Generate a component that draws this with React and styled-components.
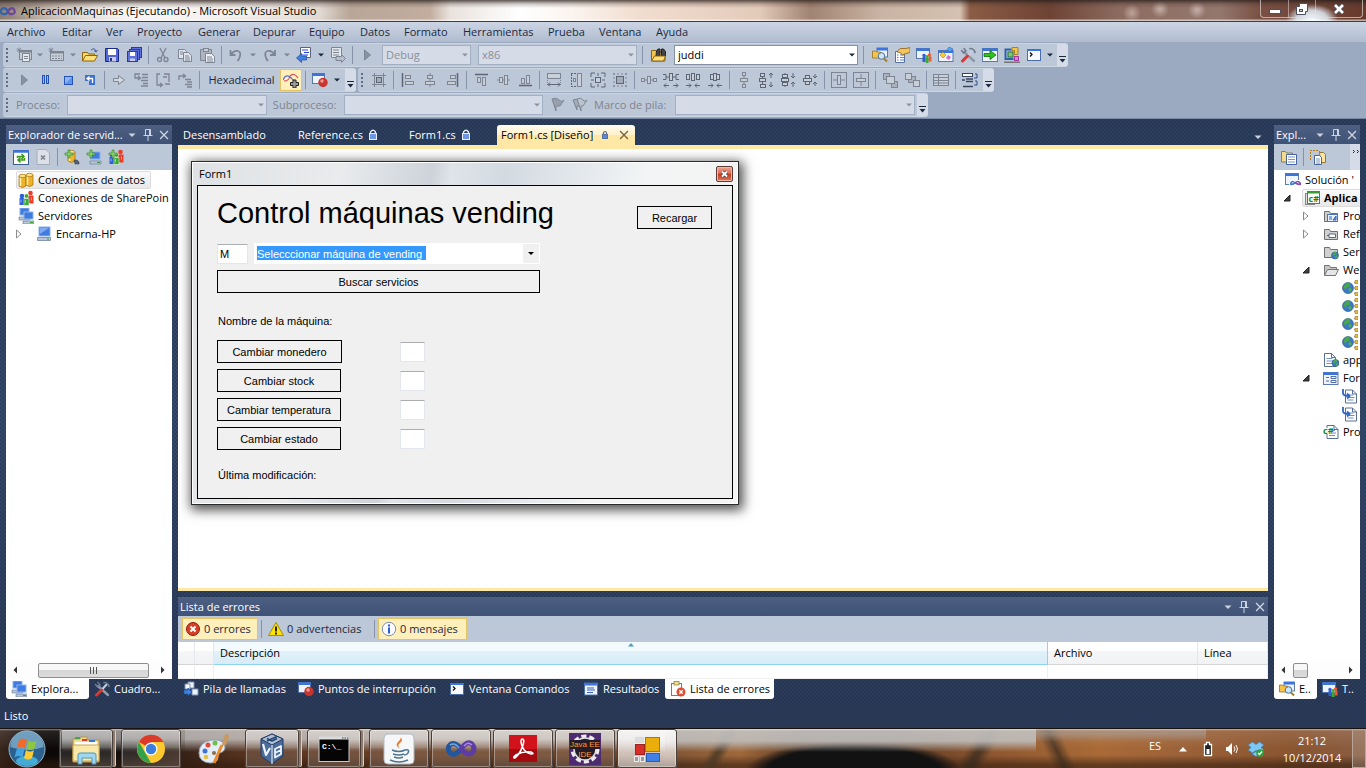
import React from "react";
import styled, { createGlobalStyle, css } from "styled-components";

const GlobalStyle = createGlobalStyle`
  * { box-sizing: border-box; }
  body {
    margin: 0;
    font-family: "Open Sans", "Noto Sans", sans-serif;
    font-size: 11px;
    line-height: 16px;
    color: #000;
  }
  button, input, select { font: inherit; color: inherit; }
`;

/* ---------- icon drawings ---------- */

const G = "#7d8593";
const L = "#c9cfd9";
const D = "#5d6675";

const server = (x, y) => (
  <g key={x}>
    <rect x={x} y={y} width="9" height="7" fill="#3f7be0" stroke="#8fb2ea" strokeWidth="1" />
    <path d={`M${x - 1} ${y + 9}h11v3h-11z`} fill="#b9c6d8" stroke="#5f7797" strokeWidth=".6" />
    <path d={`M${x + 6} ${y + 10.5}h3`} stroke="#32a13a" />
  </g>
);
const plus = <path d="M1 4h3V1h2v3h3v2H6v3H4V6H1z" fill="#8ad06c" stroke="#3e8a32" strokeWidth=".7" />;
const people = (
  <g strokeWidth=".5">
    <circle cx="4" cy="6" r="2.300" fill="#2d60d8" /><path d="M1.500 8h5v7h-5z" fill="#2d60d8" />
    <circle cx="12.500" cy="3" r="2.300" fill="#ef3a25" /><path d="M10 5.500h5.500v8H10z" fill="#ef3a25" />
    <circle cx="8.500" cy="6" r="2.200" fill="#3ea83a" stroke="#fff" /><path d="M6 8.500h5V15.500H6z" fill="#3ea83a" stroke="#fff" />
    <path d="M3 9.500v3M13.500 7.500v3M7.500 10v3" stroke="#fff" />
  </g>
);
const cyl = (x, y, h) => (
  <g>
    <path d={`M${x} ${y + 2}v${h}q3.500 3 7 0v-${h}z`} fill="#efb32b" stroke="#a26f0c" strokeWidth=".7" />
    <path d={`M${x + 1.5} ${y + 3}v${h - 1}`} stroke="#fff1b0" strokeWidth="1.500" />
    <ellipse cx={x + 3.5} cy={y + 2} rx="3.500" ry="1.700" fill="#ffe283" stroke="#a26f0c" strokeWidth=".7" />
  </g>
);
const globe = (cx, cy, r) => (
  <g>
    <circle cx={cx} cy={cy} r={r} fill="#3d79c4" stroke="#24518c" strokeWidth=".6" />
    <path d={`M${cx - r + 1} ${cy - 1}q${r / 2} -${r} ${r} -${r - 1}q${r / 2} ${r} -${r / 3} ${r - 1}q-1 ${r / 2} -${r / 2} ${r / 3}z`} fill="#48a74a" />
    <path d={`M${cx} ${cy + 1}l${r / 2} -1l1 ${r / 2}l-2 1z`} fill="#4fb04c" />
  </g>
);
const docShape = (x, y) => (
  <g>
    <path d={`M${x} ${y}h7l4 4v9h-11z`} fill="#fff" stroke="#48608a" strokeWidth=".9" />
    <path d={`M${x + 7} ${y}v4h4`} fill="none" stroke="#48608a" strokeWidth=".9" />
    <path d={`M${x + 2} ${y + 5}h6M${x + 2} ${y + 7.5}h7M${x + 2} ${y + 10}h6`} stroke="#6f8ecb" />
  </g>
);
const win = (x, y, w, h) => (
  <g>
    <rect x={x} y={y} width={w} height={h} fill="#eef3fc" stroke="#4c6da8" strokeWidth=".9" />
    <rect x={x} y={y} width={w} height="2.500" fill="#3b74dd" />
  </g>
);
const greyFolder = <path d="M1.500 3.500h5l1 2h7v8h-13z" fill="#d0d0d0" stroke="#707070" />;
const tools = (
  <g fill="none" strokeLinecap="round">
    <path d="M4 5L14 14" stroke="#8e99ab" strokeWidth="2.400" />
    <path d="M1.500 3.500l2 2.500 2.500-2-2-2.500" stroke="#6f7b8f" strokeWidth="1.500" />
    <path d="M13 3L8.500 8" stroke="#c7cfdb" strokeWidth="2" />
    <path d="M10 1.500q4 0 5 4" stroke="#6f7b8f" strokeWidth="1.700" />
    <path d="M7.500 9L2.500 14" stroke="#d63a32" strokeWidth="3" />
  </g>
);
const explorer = (
  <g>
    {win(5, 1, 10.500, 9)}
    <path d="M.5 4h3l1 1h4v6h-8z" fill="#f5c54b" stroke="#98701a" strokeWidth=".8" />
    <circle cx="9.500" cy="9" r="3.300" fill="#cde7fa" stroke="#4c7198" />
    <path d="M12 11.500l3 3" stroke="#a67d28" strokeWidth="2" />
  </g>
);
const breakpoint = (
  <g>
    {win(.5, 1.500, 12, 10)}
    <circle cx="11" cy="10.500" r="4.700" fill="#c8352e" /><circle cx="10" cy="9" r="1.700" fill="#eea092" />
  </g>
);
const teamIcon = (
  <g>
    {win(.5, 1.500, 13, 10)}
    <circle cx="8" cy="8.500" r="1.700" fill="#2d60d8" /><path d="M6.500 10h3v5h-3z" fill="#2d60d8" />
    <circle cx="13.500" cy="8" r="1.700" fill="#ef5a35" /><path d="M12.500 9.500h3v5h-3z" fill="#ef5a35" />
    <circle cx="11" cy="9.500" r="1.600" fill="#3ea83a" /><path d="M9.700 11h2.800v5H9.700z" fill="#3ea83a" />
  </g>
);
const redX = (
  <g><circle cx="8" cy="8" r="6.500" fill="#d93f24" stroke="#8f1d10" /><path d="M5.500 5.500l5 5M10.500 5.500l-5 5" stroke="#fff" strokeWidth="2" /></g>
);
const arrowsH = <path d="M1 13.500h5M4 11.500l2 2-2 2M15 13.500h-5M12 11.500l-2 2 2 2" stroke={D} fill="none" />;

const glyphs = {
  newProject: <g><rect x="3.500" y="3.500" width="12" height="9" fill={L} stroke={G} /><path d="M4 4.500h11" stroke={G} strokeWidth="2" /><rect x="6.500" y="6.500" width="7" height="8" fill="#e5e8ed" stroke={G} /><path d="M8 9.500h4M8 11.500h4" stroke={G} /><path d="M.5 3h5M3 .5v5M1 1l4 4M5 1L1 5" stroke={G} strokeWidth=".7" /></g>,
  addItem: <g><rect x="2.500" y="4.500" width="13" height="9" fill={L} stroke={G} /><path d="M3 5.500h12" stroke={G} strokeWidth="2" /><path d="M4 9h10M4 11.500h10" stroke={G} strokeDasharray="2 1" /><path d="M.5 3h5M3 .5v5M1 1l4 4M5 1L1 5" stroke={G} strokeWidth=".7" /></g>,
  open: <g><path d="M.5 13.500V5.500h5l1 1.500h6v3" fill="#f9d66e" stroke="#8b6510" /><path d="M.5 14l3-5.500h12l-3 5.500z" fill="#ffdf78" stroke="#8b6510" /><path d="M9 3q4-3 5 1.500M12 3.500l2 1.500 1.500-2" fill="none" stroke="#3a5aa0" /></g>,
  save: <g><path d="M1.500 1.500h12l1 1v12h-13z" fill="#5266d8" stroke="#1b2a86" /><rect x="4" y="2" width="8" height="6" fill="#fff" /><rect x="5" y="10" width="7" height="4.500" fill="#c8cdec" /><rect x="6" y="11" width="2" height="3" fill="#25338b" /></g>,
  saveAll: <g fill="#5d70dc" stroke="#2a3aa0"><rect x="5.500" y=".5" width="10" height="10" /><rect x="3.500" y="2.500" width="10" height="10" /><rect x="1.500" y="4.500" width="10" height="10" /><path d="M4 5h5v4H4z" fill="#fff" stroke="none" /><path d="M4 11.500h5V14H4z" fill="#c8cdec" stroke="none" /></g>,
  cut: <g fill="none" stroke={G} strokeWidth="1.300"><path d="M5 1l5 10M11 1L6 11" /><circle cx="4.500" cy="12.500" r="2" /><circle cx="11" cy="12.500" r="2" /></g>,
  copy: <g fill="#dfe3ea" stroke={G}><path d="M1.500 2.500h6l2 2v7h-8z" /><path d="M6.500 5.500h5l3 3v6h-8z" /><path d="M8 9h4M8 11h5M8 13h5M3 5h3M3 7h3" /></g>,
  paste: <g fill={L} stroke={G}><path d="M1.500 2.500h11v11h-11z" fill="#aeb5c0" /><rect x="4.500" y="1.500" width="5" height="3" /><path d="M6.500 6.500h6l3 3v6h-9z" fill="#eceff3" /><path d="M8 10h5M8 12h6M8 14h6" /></g>,
  undo: <path d="M2.500 3v5h5M3 7.500q3-4.500 7-3.500t1 8l-1.500 2" fill="none" stroke={G} strokeWidth="1.800" />,
  redo: <path d="M13 3v5H8M12.500 7.500q-3-4.500-7-3.500t-1 8l1.500 2" fill="none" stroke={G} strokeWidth="1.800" />,
  navBack: <g><path d="M4.500 .5h10v10h-10z" fill="#fff" stroke="#59647b" /><path d="M6 3h6M8 5.500h5M6 8h6" stroke="#2744e0" /><path d="M.5 11l5-4.500v2.500h5v4H5.500v2.500z" fill="#3f80dd" stroke="#1c4e9c" strokeWidth=".7" /></g>,
  navFwd: <g><path d="M1.500 .5h10v10h-10z" fill="#e4e7ec" stroke={G} /><path d="M3 3h6M3 5.500h6M3 8h6" stroke={G} /><path d="M15.500 11.500l-4-4v2H6v4h5.500v2z" fill="#b9bfca" stroke={G} /></g>,
  play: <path d="M5.500 3v10l6-5z" fill="#8992a2" stroke={G} />,
  find: <g><path d="M.5 14V3.500h4.500l1 1.500h8v9z" fill="#f3c64d" stroke="#8b6510" /><path d="M5.500 4l1.500-2h2v7H5zM10.500 9V2h2l2 2.500V9z" fill="#454545" stroke="#222" /><path d="M.5 14l3-5h11l-2 5z" fill="#ffdf78" stroke="#8b6510" /></g>,
  explorer,
  properties: <g><path d="M1.500 4.500h9v11h-9z" fill="#fff" stroke="#58719b" /><path d="M3 8h1.500M6 8h4M3 10.500h1.500M6 10.500h4M3 13h1.500M6 13h4" stroke="#5b7fca" /><path d="M3 5l3-3.500h6l4-1v5l-4 1-4 1.500-1-2z" fill="#f5c45a" stroke="#8b6119" strokeWidth=".8" /></g>,
  team: teamIcon,
  toolbox: <g>{win(.5, 3.500, 14.500, 11)}<path d="M5 5l3 3-3 3-3-3z" fill="#f6cc3d" stroke="#ac7e13" strokeWidth=".6" /><path d="M10 8l3 2-2 3-3-2z" fill="#dc69d2" /><path d="M11 0l4 2-3 3-3-2z" fill="#57a4ea" stroke="#2b6cb1" strokeWidth=".6" /></g>,
  tools,
  start: <g>{win(.5, 1.500, 15, 13)}<path d="M2 6.500h6V3.500l6 4.500-6 4.500V9.500H2z" fill="#2fc21e" stroke="#127108" strokeWidth=".8" /></g>,
  objects: <g fill="none"><path d="M1.500 13V2.500h6M1.500 12h8" stroke="#2a63a9" strokeWidth="2" /><rect x="4" y="5" width="5" height="5" fill="#80c77a" stroke="#287038" /><path d="M8 .5h6v7h-3.500v-4H8z" fill="#f1c843" stroke="#9a7414" strokeWidth=".8" /><rect x="10.500" y="9.500" width="4" height="4" fill="#e87be1" stroke="#a33b9f" /><path d="M0 15.300h16" stroke="#777" strokeWidth="1.400" /></g>,
  command: <g><rect x="1.500" y="2.500" width="13" height="11" fill="#f7f9fe" stroke="#4c6da8" /><path d="M1 3h14" stroke="#3b74dd" strokeWidth="2" /><path d="M4 5.500l2 2-2 2" fill="none" stroke="#111" strokeWidth="1.300" /></g>,
  pause: <g fill="#8fb8fa" stroke="#1f4fb5"><rect x="4.500" y="3.500" width="2" height="8" /><rect x="8.500" y="3.500" width="2" height="8" /></g>,
  stop: <g><rect x="4" y="4" width="9" height="9" fill="#2353b8" /><path d="M5 5h7v7H5z" fill="#5c94ee" /><path d="M5 5h7L5 12z" fill="#8db6f7" /></g>,
  restart: <g><path d="M3 3h10v10H7V9H3z" fill="#3a6fd4" /><path d="M10.500 11V6.500H6M7.500 4.500L5 6.500l2.500 2" fill="none" stroke="#fff" strokeWidth="1.400" /></g>,
  nextStmt: <path d="M2.500 6.500h5v-3l6 4.500-6 4.500v-3h-5z" fill="#d3d8e0" stroke={G} />,
  stepInto: <g fill="none" stroke={G} strokeWidth="1.300"><path d="M7 2H2v4h5M5 4l2.500 2L5 8" /><path d="M9 2.500h6M9 5.500h6M8 8.500h7M10 11.500h5M8 14h7" /></g>,
  stepOver: <g fill="none" stroke={G} strokeWidth="1.300"><path d="M5 2H2v11h5M5 11l2.500 2L5 15M9 2h5v8" /><path d="M10 12h5M8 5h4" /></g>,
  stepOut: <g fill="none" stroke={G} strokeWidth="1.300"><path d="M2 8V4h6M6 2l2.500 2L6 6" /><path d="M8 7.500h6M10 10h5M8 12.500h7M10 15h5" /></g>,
  threads: <g fill="none"><path d="M0 8q2-5 5-4t6 5" stroke="#4b6ad0" strokeWidth="1.200" /><path d="M1 9q5 0 6-5 4-4 8 2" stroke="#d44b58" strokeWidth="1.200" /><path d="M10 8h3v2.500h2.500v3H13V16h-3v-2.500H7.500v-3H10z" fill="#999" stroke="#222" /></g>,
  breakpoint,
  grid: <g fill="none" stroke={G}><path d="M3.500 1v14M12.500 1v14M1 3.500h14M1 12.500h14" /><rect x="5.500" y="5.500" width="5" height="5" fill="#a4acb9" stroke={D} /></g>,
  alignL: <g fill={L} stroke={G}><path d="M2.500 1v14" stroke={D} strokeWidth="1.500" /><rect x="5.500" y="3.500" width="5" height="3" /><rect x="5.500" y="9.500" width="8" height="3" /></g>,
  alignC: <g fill={L} stroke={G}><path d="M8 1v14" /><rect x="5.500" y="3.500" width="5" height="3" /><rect x="3.500" y="9.500" width="9" height="3" /></g>,
  alignR: <g fill={L} stroke={G}><path d="M13.500 1v14" stroke={D} strokeWidth="1.500" /><rect x="6.500" y="3.500" width="5" height="3" /><rect x="3.500" y="9.500" width="8" height="3" /></g>,
  alignT: <g fill={L} stroke={G}><path d="M2 2.500h13" stroke={D} strokeWidth="1.500" /><rect x="4.500" y="5.500" width="3" height="5" /><rect x="9.500" y="5.500" width="3" height="8" /></g>,
  alignM: <g fill={L} stroke={G}><path d="M2 8h13" /><rect x="4.500" y="5.500" width="3" height="5" /><rect x="9.500" y="3.500" width="3" height="9" /></g>,
  alignB: <g fill={L} stroke={G}><path d="M2 13.500h13" stroke={D} strokeWidth="1.500" /><rect x="4.500" y="6.500" width="3" height="5" /><rect x="9.500" y="3.500" width="3" height="8" /></g>,
  sizeW: <g fill={L} stroke={G}><rect x="1.500" y="1.500" width="13" height="5" /><path d="M1.500 8v5M14.500 8v5" strokeDasharray="1 1" /><path d="M2 12.500h12M4 10.500l-2 2 2 2M12 10.500l2 2-2 2" fill="none" stroke={D} /></g>,
  sizeH: <g fill={L} stroke={G}><rect x="9.500" y="1.500" width="4" height="13" /><path d="M8 1.500H3M8 14.500H3M3.500 2v12" strokeDasharray="2 1" stroke={D} /><rect x="5.500" y="6.500" width="2" height="3" /></g>,
  sizeBoth: <g fill={L} stroke={D}><rect x="5.500" y="5.500" width="5" height="5" /><path d="M1 5V1h4M11 1h4v4M15 11v4h-4M5 15H1v-4M8 1v3M8 12v3M1 8h3M12 8h3" fill="none" /></g>,
  sizeGrid: <g fill={L} stroke={G}><rect x="4.500" y="4.500" width="7" height="7" fill="#a4acb9" stroke={D} /><path d="M1 2h14M1 14h14M2 1v14M14 1v14" strokeDasharray="2 2" /></g>,
  hEqual: <g fill={L} stroke={G}><path d="M0 8h16" /><rect x=".5" y="6.500" width="3" height="3" /><rect x="6.500" y="4.500" width="3" height="7" /><rect x="12.500" y="6.500" width="3" height="3" /></g>,
  hMore: <g fill="none" stroke={D}><path d="M0 2.500h3v5H0M16 2.500h-3v5h3M3 5h3M10 5h3" /><rect x="6.500" y="1.500" width="3" height="7" fill={L} /><path d="M6 13.500H1M3 11.500l-2 2 2 2M10 13.500h5M13 11.500l2 2-2 2" /></g>,
  hLess: <g fill={L} stroke={D}><rect x="1.500" y="2.500" width="3" height="5" /><rect x="6.500" y="1.500" width="3" height="7" /><rect x="11.500" y="2.500" width="3" height="5" />{arrowsH}</g>,
  hNone: <g fill={L} stroke={D}><rect x="3.500" y="2.500" width="3" height="5" /><rect x="6.500" y="1.500" width="3" height="7" /><rect x="9.500" y="2.500" width="3" height="5" />{arrowsH}</g>,
  vEqual: <g fill={L} stroke={G}><path d="M8 0v16" /><rect x="6.500" y=".5" width="3" height="3" /><rect x="4.500" y="6.500" width="7" height="3" /><rect x="6.500" y="12.500" width="3" height="3" /></g>,
  vMore: <g fill={L} stroke={D}><path d="M4.500 1v14" /><path d="M13 6V1M11 3l2-2 2 2M13 10v5M11 13l2 2 2-2" fill="none" /><rect x="2.500" y="1.500" width="4" height="3" /><rect x="1.500" y="6.500" width="6" height="3" /><rect x="2.500" y="12.500" width="5" height="3" /></g>,
  vLess: <g fill={L} stroke={D}><path d="M5 1v14" /><path d="M13 1v5M11 4l2 2 2-2M13 15v-5M11 12l2-2 2 2" fill="none" /><rect x="2.500" y="2.500" width="5" height="3" /><rect x="1.500" y="6.500" width="7" height="3" /><rect x="2.500" y="10.500" width="5" height="3" /></g>,
  vNone: <g fill={L} stroke={D}><path d="M13 2v4M11 4l2 2 2-2M13 14v-4M11 12l2-2 2 2" fill="none" /><rect x="3.500" y="3.500" width="4" height="3" /><rect x="1.500" y="6.500" width="8" height="3" /><rect x="3.500" y="9.500" width="4" height="3" /></g>,
  centerH: <g fill={L} stroke={G}><rect x=".5" y=".5" width="15" height="15" fill="none" /><path d="M2 8h12" /><rect x="6.500" y="3.500" width="3" height="9" /></g>,
  centerV: <g fill={L} stroke={G}><rect x=".5" y=".5" width="15" height="15" fill="none" /><path d="M8 2v12" /><rect x="3.500" y="6.500" width="9" height="3" /></g>,
  front: <g fill="#aab1bd" stroke={G}><rect x="1.500" y="1.500" width="6" height="6" /><rect x="9.500" y="9.500" width="6" height="6" /><rect x="4.500" y="4.500" width="8" height="7" fill={L} /></g>,
  back: <g fill={L} stroke={G}><rect x="4.500" y="4.500" width="7" height="6" fill="#aab1bd" /><rect x="1.500" y="1.500" width="6" height="6" /><rect x="9.500" y="8.500" width="6" height="6" /></g>,
  table: <g fill={L} stroke={G}><rect x=".5" y="2.500" width="15" height="11" /><path d="M0 5.500h16M0 8.500h16M0 11h16M5.500 3v11" /></g>,
  tabOrder: <g fill="#fff" stroke="#38465f"><rect x=".5" y="1.500" width="10" height="3" /><path d="M0 8h3M4 7h7M4 9.500h7M1 14.500h10" strokeWidth="1.500" /><path d="M13 2h2v4h-3M13 9h2v4h-3" fill="none" stroke="#2d4f91" /></g>,
  flag: <path d="M2 2q4-2 7 1t5 0l-4 6H6v5z" fill="#98a0ad" stroke={G} />,
  flags: <g fill="#a4abb8" stroke={G}><path d="M1 3q4-2 6 1t5 0l-4 5H5v4z" /><path d="M5 2q4-2 6 1t4 0l-4 6H9v5z" fill="#bdc3cd" /></g>,
  refresh: <g><rect x=".5" y="1.500" width="15" height="14" fill="#fff" stroke="#3d5c94" /><path d="M0 2.500h16" stroke="#3b74dd" strokeWidth="2.500" /><path d="M4.500 9V7.500h6M8.500 5l2.500 2.500L8.500 10M11.500 9v2H6M7.500 8.500L5 11l2.500 2.500" fill="none" stroke="#3c9a18" strokeWidth="1.500" /></g>,
  stopDoc: <g><path d="M2 .5h9l3.500 3.500v11.500H2z" fill="#dde0e6" stroke="#a6adba" /><path d="M6 6.500l4 4M10 6.500l-4 4" stroke={G} strokeWidth="1.700" /></g>,
  addDb: <g>{cyl(4, 1, 9)}{plus}<path d="M10 11h3l2 2v2h-4z" fill="#59636f" stroke="#333" strokeWidth=".5" /></g>,
  addServer: <g>{server(5, 3)}{plus}</g>,
  addSp: <g>{people}{plus}</g>,
  db: <g>{cyl(1, 2, 10)}{cyl(8, 1, 10)}</g>,
  people,
  servers: <g>{server(2, 0)}{server(6, 4)}</g>,
  server: <g><rect x="3" y="1" width="11" height="9" fill="#3f7be0" stroke="#8fb2ea" /><path d="M4 2h9L4 8z" fill="#7faaf0" /><path d="M1.500 11.500h13v3h-13z" fill="#b9c6d8" stroke="#5f7797" strokeWidth=".7" /><path d="M11 13h2" stroke="#32a13a" /></g>,
  propPages: <g><path d="M.5 2.500h4l1 1.500h6v9H.5z" fill="#f6d98a" stroke="#8c7c55" /><path d="M5.500 5.500h10v10h-10z" fill="#fff" stroke="#46659c" /><path d="M7 8h7M7 10.500h7M7 13h7" stroke="#7893c4" /></g>,
  showAll: <g><path d="M.5 11V1.500h8l2 2" fill="none" stroke="#b07a17" strokeDasharray="2 1" /><path d="M9.500 3.500h4l2 2v8h-5z" fill="#fce5a2" stroke="#9a762e" /><path d="M4.500 6.500h5l2 2v7h-7z" fill="#fff" stroke="#46659c" /><path d="M6 10h4M6 12h4M6 14h4" stroke="#7893c4" /></g>,
  solution: <g>{win(.5, 1.500, 13, 11)}<path d="M10 11q-3-3-4 0t4 0q3-3 5 0t-5 0" fill="none" stroke="#fff" strokeWidth="3.500" /><path d="M10 11q-3-3-4 0t4 0" fill="none" stroke="#3f7ccd" strokeWidth="1.700" /><path d="M10 11q3-3 5 0t-5 0" fill="none" stroke="#8151ad" strokeWidth="1.700" /></g>,
  csproj: <g><rect x="1.500" y="3.500" width="9" height="11" fill="#ddd" stroke="#888" /><rect x="3.500" y="1.500" width="12" height="12" fill="#fff" stroke="#547a58" /><path d="M3 2.500h13" stroke="#3b9d31" strokeWidth="2" /><text x="4.500" y="11.500" fontSize="9" fontWeight="700" fill="#178914">c#</text></g>,
  fProps: <g>{greyFolder}<rect x="4.500" y="6.500" width="10" height="7" fill="#eaf1ff" stroke="#4f74b2" /><path d="M6 9h3M6 11h3M10 12l3-4v4z" stroke="#2e63c4" fill="#6f9ce8" /></g>,
  fRefs: <g>{greyFolder}<path d="M4 9.500h2M6 8h6.500v3.500H6z" fill="#fff" stroke="#55698a" /></g>,
  fServ: <g>{greyFolder}{globe(12, 11.500, 3.500)}</g>,
  fOpen: <g><path d="M1.500 13V3.500h5l1 2h6v3" fill="#c6c6c6" stroke="#757575" /><path d="M1.500 13.500l3-6h11l-3 6z" fill="#e5e5e5" stroke="#757575" /></g>,
  web: <g>{globe(6, 8, 5.500)}<path d="M11.500 8h2M12 3l2-1.500M12 13l2 1.500" stroke="#888" /><path d="M13 .5h3v3h-3zM13 6.500h3v3h-3zM13 12.500h3v3h-3z" fill="#f2c12f" stroke="#9b7410" strokeWidth=".6" /></g>,
  config: <g>{docShape(1.500, 1.500)}{globe(12.500, 11, 3.500)}</g>,
  form: <g>{win(.5, 2.500, 14.500, 12)}<path d="M3 7.500h3M3 11h3M8 6.500h5v2H8zM8 10.500h5v2H8z" fill="#fff" stroke="#506fa6" /></g>,
  nested: <g>{docShape(3.500, 2)}<path d="M1 1v4q0 3 6 3M5 5.500L7.500 8 5 10.500" fill="none" stroke="#2f66c6" strokeWidth="1.800" /></g>,
  cs: <g>{docShape(4, 1.500)}<path d="M0 4h9v6H0z" fill="#fff" /><text x="0" y="9.500" fontSize="9" fontWeight="700" fill="#178914">c#</text></g>,
  stack: <g><path d="M5 1h6v6H5zM9 8h6v6H9z" fill="#eef3fc" stroke="#7d93b7" /><path d="M2 3h5v5H2z" fill="#fff" stroke="#7d93b7" /><path d="M1 9h4V7l4 4-4 4v-2H1z" fill="#3f80dd" stroke="#1c4e9c" strokeWidth=".6" /></g>,
  output: <g>{win(1.500, 2, 13, 12)}<path d="M4 7h7M4 9h8M4 11.500h6" stroke="#3660b5" /></g>,
  errList: <g><rect x="1.500" y="2.500" width="10" height="12" fill="#fff" stroke="#6f7d92" /><rect x="4" y=".5" width="5" height="3.500" fill="#efdc91" stroke="#897637" strokeWidth=".7" /><circle cx="11" cy="11" r="4.500" fill="#e04d2e" /><path d="M9.300 9.300l3.400 3.400M12.700 9.300l-3.400 3.400" stroke="#fff" strokeWidth="1.400" /></g>,
  error: redX,
  warn: <g><path d="M8 1.500L15.500 14.500H.5z" fill="#ffe20a" stroke="#a88b00" /><path d="M8 5.500v5M8 11.500v2" stroke="#111" strokeWidth="1.800" /></g>,
  info: <g><circle cx="8" cy="8" r="6.700" fill="#f9fbff" stroke="#7f8fa8" /><path d="M8 3.500v2M8 6.500v6" stroke="#2b5fd0" strokeWidth="2" /></g>,
  lock: <g><rect x="4.500" y="6.500" width="7" height="6" fill="#6d96e6" stroke="#e8eefa" /><path d="M5.500 6.500V5q2.500-3.500 5 0v1.500" fill="none" stroke="#e8eefa" strokeWidth="1.300" /></g>,
  lockOn: <g><rect x="5.500" y="7.500" width="5" height="4" fill="#5d86dd" stroke="#5c6f9b" /><path d="M6.500 7V5.500q1.500-2 3 0V7" fill="none" stroke="#5c6f9b" strokeWidth="1.200" /></g>,
  down: <path d="M4.500 6.500h7L8 10z" fill="currentColor" />,
  pin: <path d="M5.500 2.500h5v6h-5zM9.500 3v5M3.500 8.500h9M8 9v5" fill="none" stroke="currentColor" />,
  close: <path d="M3.500 3.500l9 9M12.500 3.500l-9 9" stroke="currentColor" strokeWidth="1.500" />,
  collapsed: <path d="M5.500 4v8l4.500-4z" fill="#fff" stroke="#8b8b8b" />,
  expanded: <path d="M11 5v6H5z" fill="#404040" stroke="#222" />,
  left: <path d="M10 4.500v7L6.500 8z" fill="#333" />,
  right: <path d="M6 4.500v7L9.500 8z" fill="#333" />,
};

function Icon({ name, size = 16 }) {
  return <svg width={size} height={size} viewBox="0 0 16 16" aria-hidden="true">{glyphs[name]}</svg>;
}

/* ---------- frame ---------- */

const Screen = styled.div`
  display: flex;
  flex-direction: column;
  min-height: 100vh;
  overflow: hidden;
  svg { display: block; flex: none; }
`;

const TitleBar = styled.header`
  display: flex;
  align-items: center;
  height: 22px;
  border-bottom: 1px solid #4a3a35;
  background:
    linear-gradient(180deg, rgba(40, 30, 26, .75) 0, rgba(60, 45, 40, .25) 4px, transparent 8px, transparent 19px, rgba(255, 255, 255, .6) 20px),
    radial-gradient(ellipse 26px 16px at 1312px 20px, #f5fdff 0, rgba(230, 245, 255, .8) 60%, transparent 100%),
    radial-gradient(circle 9px at 1132px 13px, rgba(220, 200, 195, .6), transparent),
    radial-gradient(circle 9px at 1160px 9px, rgba(220, 200, 195, .7), transparent),
    radial-gradient(circle 9px at 1197px 10px, rgba(220, 200, 195, .7), transparent),
    radial-gradient(ellipse 170px 13px at 175px 13px, rgba(255, 255, 255, .6) 40%, transparent 100%),
    linear-gradient(90deg, #8d7e74 0, #c2b4aa 60px, #ece7e3 130px, #ddd3cc 320px, #b8a698 350px, #c2ad9f 430px, #e9e2dc 450px,
      #fff 520px, #fbf5f0 570px, #f1ddcf 640px, #e3cbb9 760px, #a08372 810px, #c9b3a2 880px, #d6c2b2 960px, #8b5c45 970px, #6d4335 1050px,
      #8d6c60 1120px, #93776d 1220px, #7a5044 1260px, #66392c 100%);
`;
const AppTitle = styled.h1`
  flex: 1;
  margin: 0;
  padding-left: 5px;
  font-size: 11px;
  font-weight: 400;
`;
const WindowButtons = styled.div`
  display: flex;
  align-self: flex-start;
  height: 18px;
  margin-right: 3px;
  border: 1px solid rgba(235, 225, 220, .65);
  border-top: 0;
  border-radius: 0 0 4px 4px;
`;
const WindowButton = styled.button`
  display: grid;
  place-items: center;
  width: ${(p) => p.$w}px;
  padding: 0;
  border: 0;
  border-right: ${(p) => (p.$last ? 0 : "1px solid rgba(235,225,220,.5)")};
  background: transparent;
`;

const MenuBar = styled.nav`
  display: flex;
  align-items: center;
  height: 20px;
  padding-left: 7px;
  background: linear-gradient(#ccd5e4, #b0bccf);
`;
const MenuLink = styled.a`
  width: ${(p) => p.$w}px;
  color: #1b293e;
  text-decoration: none;
  white-space: nowrap;
`;

const ToolbarArea = styled.div`
  display: flex;
  flex-direction: column;
  gap: 1px;
  height: 77px;
  padding: 1px 3px;
  border-bottom: 1px solid #7787a2;
  background: #9caac1;
`;
const ToolbarLine = styled.div`
  display: flex;
  gap: 2px;
`;
const Toolbar = styled.div`
  display: flex;
  align-items: center;
  height: 24px;
  overflow: hidden;
  border: 1px solid #ccd5e2;
  border-width: 1px 0;
  border-radius: 3px;
  background: #bcc7d8;
`;
const Grip = styled.span`
  width: 10px;
  height: 14px;
  background: radial-gradient(circle at 1px 1px, #5f6d86 1px, transparent 1px) 3px 0 / 10px 4px repeat-y;
`;
const Tool = styled.button`
  display: flex;
  align-items: center;
  justify-content: center;
  flex: none;
  width: ${(p) => p.$w || 22}px;
  height: 22px;
  padding: 0;
  border: 1px solid ${(p) => (p.$on ? "#e5c365" : "transparent")};
  background: ${(p) => (p.$on ? "#ffefbb" : "transparent")};
  color: ${(p) => (p.$dim ? "#7d8593" : "#1b293e")};
`;
const Separator = styled.span`
  width: 1px;
  height: 18px;
  margin: 0 ${(p) => (p.$wide ? 5 : 3)}px;
  background: #8592a9;
`;
const Spacer = styled.span`
  width: 4px;
`;
const ToolLabel = styled.label`
  width: ${(p) => p.$w}px;
  padding-left: 3px;
  color: #80858f;
  white-space: nowrap;
`;
const ComboBox = styled.span`
  position: relative;
  display: block;
  width: ${(p) => p.$w}px;
  margin-left: ${(p) => p.$gap || 0}px;
  color: ${(p) => (p.$dim ? "#8d94a1" : "#1b293e")};
  > svg { position: absolute; right: 0; top: 3px; pointer-events: none; }
`;
const ToolSelect = styled.select`
  display: block;
  appearance: none;
  width: 100%;
  height: 20px;
  padding: 0 3px;
  border: 1px solid ${(p) => (p.disabled ? "#a3afc3" : "#8591a2")};
  border-radius: 0;
  background: ${(p) => (p.disabled ? "#d5dbe7" : "#fff")};
  color: ${(p) => (p.disabled ? "#8a909b" : "#000")};
  opacity: 1;
`;
const OverflowButton = styled.button`
  display: flex;
  align-items: flex-end;
  align-self: stretch;
  width: 11px;
  margin-left: 2px;
  padding: 0 0 3px 2px;
  border: 0;
  background: #d5dce8;
`;

function Combo({ w, gap, value, label, id, live }) {
  return (
    <ComboBox $w={w} $gap={gap} $dim={!live}>
      <ToolSelect id={id} aria-label={label} disabled={!live}><option>{value}</option></ToolSelect>
      <svg width="12" height="14" viewBox="0 0 12 14"><path d="M3 5.500h6L6 8.500z" fill="currentColor" /></svg>
    </ComboBox>
  );
}
function Arrow({ w = 10, dim }) {
  return <Tool $w={w} $dim={dim} aria-label="Más"><svg width="6" height="4" viewBox="0 0 6 4"><path d="M0 .5h6L3 3.500z" fill="currentColor" /></svg></Tool>;
}
function Overflow() {
  return <OverflowButton aria-label="Opciones"><svg width="7" height="8" viewBox="0 0 7 8"><path d="M0 1.500h7" stroke="#1b293e" /><path d="M.5 4h6l-3 3.500z" fill="#1b293e" /></svg></OverflowButton>;
}
function Tools({ names }) {
  return names.split(" ").map((n, i) => (n === "|" ? <Separator key={i} /> : <Tool key={i} aria-label={n}><Icon name={n} /></Tool>));
}

/* ---------- work area ---------- */

const WorkArea = styled.main`
  display: grid;
  grid-template-columns: 166px minmax(0, 1fr) 86px;
  gap: 6px;
  flex: 1;
  padding: 6px 6px 5px;
  background:
    radial-gradient(circle at 1px 1px, rgba(15, 28, 52, .2) 1px, transparent 1px) 0 0 / 4px 4px,
    radial-gradient(circle at 1px 1px, rgba(15, 28, 52, .2) 1px, transparent 1px) 2px 2px / 4px 4px,
    linear-gradient(#2c3d5d, #35496b 50%, #2b3b59);
`;
const Column = styled.div`
  display: flex;
  flex-direction: column;
  min-width: 0;
`;
const Panel = styled.section`
  display: flex;
  flex-direction: column;
  flex: ${(p) => (p.$grow ? 1 : "none")};
  overflow: hidden;
  background: #fff;
`;
const PanelTitle = styled.div`
  display: flex;
  align-items: center;
  height: 19px;
  padding: 0 0 0 2px;
  background: linear-gradient(#4d6082, #3f5277);
  color: #fff;
  h2 { flex: 1; margin: 0; font-size: 11px; font-weight: 400; white-space: nowrap; }
`;
const TitleButton = styled.button`
  display: grid;
  place-items: center;
  padding: 0;
  width: 16px;
  height: 16px;
  border: 0;
  background: transparent;
  color: #ced4dd;
`;
const PanelTools = styled.div`
  display: flex;
  align-items: center;
  height: 26px;
  padding-left: 4px;
  background: #bcc7d8;
`;
const MoreTools = styled.button`
  align-self: stretch;
  width: 10px;
  margin-left: auto;
  padding: 4px 0 0 2px;
  border: 0;
  background: #d5dce8;
`;
const Tree = styled.ul`
  flex: 1;
  margin: 0;
  padding: 1px 0;
  list-style: none;
`;
const TreeRow = styled.li`
  display: flex;
  align-items: center;
  height: 18px;
  padding-left: ${(p) => p.$indent}px;
  font-weight: ${(p) => (p.$bold ? 700 : 400)};
  white-space: nowrap;
`;
const TreeLabel = styled.span`
  display: flex;
  align-items: center;
  gap: 4px;
  height: 18px;
  padding: 0 5px 0 1px;
  border: 1px solid ${(p) => (p.$selected ? "#dcdcdc" : "transparent")};
  border-radius: 2px;
  background: ${(p) => (p.$selected ? "linear-gradient(#fafafa, #e8e8e8)" : "none")};
`;
const ArrowSlot = styled.span`
  flex: none;
  width: 23px;
`;
const ScrollBar = styled.div`
  display: flex;
  align-items: center;
  height: 18px;
  padding: 0 1px;
  background: #fdfdfd;
`;
const ScrollTrack = styled.div`
  flex: 1;
  height: 15px;
  padding: 0 ${(p) => p.$after}px 0 ${(p) => p.$before}px;
`;
const Thumb = styled.div`
  display: grid;
  place-items: center;
  height: 15px;
  border: 1px solid #8e8e8e;
  border-radius: 2px;
  background: linear-gradient(#f7f7f7 45%, #d6d6d6 50%, #dcdcdc);
`;
const TabStrip = styled.div`
  display: flex;
  height: 20px;
`;
const PanelTab = styled.button`
  display: flex;
  align-items: center;
  gap: 4px;
  width: ${(p) => p.$w}px;
  padding: 0 0 0 5px;
  border: 0;
  border-radius: 0 0 3px 3px;
  background: ${(p) => (p.$active ? "#fff" : "transparent")};
  color: ${(p) => (p.$active ? "#000" : "#fff")};
  white-space: nowrap;
`;

const DocTabs = styled.div`
  display: flex;
  height: 20px;
`;
const DocTab = styled.button`
  display: flex;
  align-items: center;
  width: ${(p) => p.$w}px;
  padding: 0 0 0 ${(p) => (p.$active ? 4 : 5)}px;
  border: 0;
  border-radius: 3px 3px 0 0;
  background: ${(p) => (p.$active ? "linear-gradient(#fffbef, #fff1cb 50%, #ffe8a6 52%)" : "transparent")};
  color: ${(p) => (p.$active ? "#000" : "#fff")};
  white-space: nowrap;
`;
const DocName = styled.span`
  width: ${(p) => p.$w}px;
  text-align: left;
`;
const DocClose = styled.span`
  padding-left: 4px;
  color: #75633d;
`;
const DocMenu = styled.span`
  flex: 1;
  display: flex;
  justify-content: flex-end;
  align-items: flex-end;
  padding-right: 2px;
  color: #ced4dd;
`;
const Designer = styled.div`
  flex: 1;
  margin-bottom: 6px;
  padding: 12px 13px;
  border: solid #ffe8a6;
  border-width: 4px 0 3px;
  background: #fff;
`;

/* ---------- designed form ---------- */

const FormWindow = styled.section`
  width: 548px;
  padding: 0 5px 5px;
  border: 1px solid #2b2b2b;
  background: linear-gradient(100deg, #dfe2e4, #e9ebed 25%, #cdd3da 40%, #dfe4e9 43%, #d3dae2 52%, #f2f4f5 75%, #f4f4f4);
  box-shadow: 2px 3px 11px 2px rgba(0, 0, 0, .7), inset 0 0 0 1px #fff;
  font-family: "Liberation Sans", Arial, sans-serif;
`;
const FormCaption = styled.div`
  display: flex;
  align-items: center;
  justify-content: space-between;
  height: 23px;
  padding-left: 2px;
  font-family: "Open Sans", sans-serif;
`;
const CloseBox = styled.button`
  display: grid;
  place-items: center;
  width: 17px;
  height: 16px;
  padding: 0;
  border: 1px solid #5c3a37;
  border-radius: 2px;
  background: linear-gradient(#eba392, #dc6f55 45%, #c5391b 50%, #dd765b);
  box-shadow: inset 0 0 0 1px #f1b8aa;
`;
const FormBody = styled.form`
  height: 314px;
  padding: 11px 20px 0 19px;
  border: 1px solid #000;
  background: #f0f0f0;
`;
const Heading = styled.h3`
  margin: 0;
  align-self: flex-start;
  font-size: 29px;
  line-height: 32px;
  font-weight: 400;
  white-space: nowrap;
`;
const Spread = styled.div`
  display: flex;
  justify-content: space-between;
  align-items: center;
  height: 41px;
`;
const FlatButton = styled.button`
  display: block;
  width: ${(p) => p.$w}px;
  height: 23px;
  padding: 0;
  border: 1px solid #000;
  border-radius: 0;
  background: #f0f0f0;
`;
const TextBox = styled.input`
  width: ${(p) => p.$w}px;
  height: 20px;
  padding: 0 2px;
  border: 1px solid #e2e6ee;
  border-top-color: #abadb3;
  border-radius: 1px;
  background: #fff;
`;
const FieldRow = styled.div`
  display: flex;
  align-items: center;
  gap: 6px;
  height: 21px;
  margin: 5px 0 6px;
`;
const FormCombo = styled.span`
  position: relative;
  display: block;
  > svg { position: absolute; right: 1px; top: 1px; pointer-events: none; }
`;
const FormSelect = styled.select`
  display: block;
  appearance: none;
  width: 286px;
  height: 21px;
  padding: 0 3px;
  border: 0;
  border-radius: 0;
  background: linear-gradient(#39f, #39f) 3px 3px / 169px 14px no-repeat, #fff;
  color: #fff;
`;
const FormText = styled.p`
  margin: 0;
  padding: ${(p) => (p.$last ? 17 : 20)}px 1px 11px;
`;
const ActionGrid = styled.div`
  display: grid;
  grid-template-columns: 125px 25px;
  column-gap: 58px;
  row-gap: 6px;
  align-items: center;
`;

/* ---------- error list ---------- */

const Filter = styled.button`
  display: flex;
  align-items: center;
  gap: 3px;
  height: 22px;
  width: ${(p) => p.$w}px;
  padding: 0 0 0 2px;
  border: 1px solid ${(p) => (p.$on ? "#e5c365" : "transparent")};
  background: ${(p) => (p.$on ? "#ffefbb" : "transparent")};
  color: #1b293e;
  white-space: nowrap;
`;
const ErrorTable = styled.table`
  width: 100%;
  table-layout: fixed;
  border-collapse: separate;
  border-spacing: 0;
  th {
    position: relative;
    height: 23px;
    padding: 0 6px;
    border-right: 1px solid #e4e8ee;
    border-bottom: 1px solid #d5d5d5;
    background: linear-gradient(#fff 40%, #f5f6f8 42%, #f1f2f4);
    font-weight: 400;
    text-align: left;
  }
  th.sorted {
    border-color: #8cd4f0;
    background: linear-gradient(#f2fafd 40%, #e0f1fa 42%, #d8ecf6);
  }
  th svg { position: absolute; top: 0; left: calc(50% - 4px); }
  td { height: 14px; padding: 0; border-right: 1px solid #efefef; border-bottom: 1px solid #efefef; }
`;

const StatusBar = styled.footer`
  display: flex;
  align-items: center;
  height: 24px;
  padding-left: 4px;
  background: #293955;
  color: #fff;
`;

/* ---------- taskbar ---------- */

const TaskBar = styled.div`
  display: flex;
  align-items: stretch;
  height: 40px;
  border-top: 1px solid #17120f;
  background:
    linear-gradient(rgba(255, 255, 255, .5) 0, rgba(255, 255, 255, .1) 2px, rgba(255, 255, 255, .04) 14px, transparent 20px),
    linear-gradient(180deg, rgba(205, 205, 205, .75) 0 10px, transparent 23px) 185px 0 / 480px 40px no-repeat,
    linear-gradient(180deg, rgba(188, 186, 184, .9) 0 12px, transparent 23px) 660px 0 / 376px 40px no-repeat,
    linear-gradient(180deg, rgba(205, 205, 205, .6) 0 10px, transparent 23px) 62px 0 / 123px 40px no-repeat,
    linear-gradient(180deg, rgba(160, 150, 142, .6) 0 5px, transparent 13px) 1036px 0 / 170px 40px no-repeat,
    radial-gradient(ellipse 108px 30px at 854px 42px, #121212 80%, transparent 100%),
    linear-gradient(120deg, transparent 38%, rgba(51, 40, 28, .7) 48% 52%, transparent 62%) 935px 0 / 90px 40px no-repeat,
    linear-gradient(65deg, transparent 30%, rgba(51, 40, 28, .7) 50%, transparent 70%) 1036px 0 / 40px 40px no-repeat,
    linear-gradient(120deg, transparent 38%, rgba(74, 56, 36, .8) 48% 52%, transparent 62%) 690px 0 / 60px 40px no-repeat,
    linear-gradient(180deg, transparent 26px, rgba(50, 28, 14, .6) 36px),
    linear-gradient(90deg, #38261d 0, #0d0908 40px, #0b0807 55px, #16100d 130px, #3a2418 190px, #55321f 240px, #6a4127 420px,
      #6f452a 600px, #7b5235 660px, #a0683a 740px, #5b3b25 800px, #5b3b25 900px, #8c552f 980px, #a96a37 1100px, #9c6238 1180px, #8a5530 1290px, #8a5d42 100%);
`;
const StartButton = styled.button`
  width: 59px;
  padding: 0 0 0 8px;
  border: 0;
  background: transparent;
`;
const TaskButton = styled.button`
  display: grid;
  place-items: center;
  width: ${(p) => (p.$stacked ? 54 : 60)}px;
  margin-right: ${(p) => (p.$stacked ? 8 : 2)}px;
  padding: 0;
  border: 1px solid transparent;
  border-radius: 3px;
  background: transparent;
  ${(p) => !p.$idle && css`
    border-color: #e6dcd5;
    outline: 1px solid rgba(35, 25, 20, .8);
    outline-offset: -1px;
    background: ${p.$active
      ? "linear-gradient(rgba(255,255,255,.85), rgba(255,255,255,.55))"
      : "linear-gradient(rgba(255,255,255,.4), rgba(255,255,255,.2) 48%, rgba(255,255,255,.1) 52%, rgba(255,255,255,.16))"};
    box-shadow: inset 0 0 0 1px rgba(255, 255, 255, .35)${p.$stacked ? ", 3px 0 0 -1px #8e7a6d, 4px 0 0 -1px #d9cdc4" : ""};
  `}
`;
const Tray = styled.div`
  display: flex;
  align-items: center;
  margin-left: auto;
  color: #fff;
`;
const TrayLang = styled.span`
  width: 27px;
  padding-bottom: 6px;
`;
const TrayIcon = styled.button`
  width: 24px;
  padding: 0;
  border: 0;
  background: transparent;
`;
const Clock = styled.time`
  width: 80px;
  line-height: 17px;
  text-align: center;
`;
const ShowDesktop = styled.button`
  align-self: stretch;
  width: 14px;
  padding: 0;
  border: 1px solid #b6a598;
  background: rgba(180, 160, 145, .35);
`;

const apps = {
  folder: <g><path d="M3 6h7l1-2h6v3h12v22H3z" fill="#f3dc8d" stroke="#b99541" /><path d="M5 9h22v3H5z" fill="#fff" /><path d="M5 5h5M12 7h5M20 8h5" stroke="#3ea54b" strokeWidth="2" /><path d="M19 8h6" stroke="#3a76c9" strokeWidth="2" /><path d="M12 7h5" stroke="#d8402f" strokeWidth="2" /><path d="M3 12h26v16H3z" fill="#f9e9a9" stroke="#c9a650" /><path d="M8 31V22q0-2 2-2h14q2 0 2 2v9h-4v-6H12v6z" fill="#9fd7f1" stroke="#4d96c0" /></g>,
  chrome: <g><circle cx="16" cy="16" r="14" fill="#fbc92f" /><path d="M16 16L4 9a14 14 0 0 1 24.500 0H16z" fill="#dc3b2c" /><path d="M4 9l6 10.500 6 10.500A14 14 0 0 1 4 9z" fill="#34a04a" /><circle cx="16" cy="16" r="6.500" fill="#fff" /><circle cx="16" cy="16" r="5.200" fill="#3a7ddd" /></g>,
  paint: <g><path d="M2 20q0-11 13-13 12-1 13 7 0 5-6 6-3 1-1 4 0 6-8 6-11-1-11-10z" fill="#e4edf6" stroke="#8fa4ba" /><circle cx="8" cy="18" r="2.500" fill="#4174d4" /><circle cx="11" cy="12" r="2.500" fill="#df4936" /><circle cx="18" cy="10" r="2.500" fill="#6fc045" /><circle cx="9" cy="24" r="2.300" fill="#e8c037" /><circle cx="17" cy="20" r="2" fill="#8a6b4d" /><path d="M17 30l8-18" stroke="#e98b2d" strokeWidth="3" /><path d="M25 12l2-9q4-4 5 0 0 3-4 10z" fill="#c79a63" /></g>,
  vbox: <g strokeLinejoin="round"><path d="M16 1l11 5v17l-11 8-11-8V6z" fill="#4b6b98" stroke="#213a61" /><path d="M16 1l11 5-11 6L5 6z" fill="#aebfd5" stroke="#213a61" /><path d="M16 12v19" stroke="#bccbe0" strokeWidth="1.500" /><path d="M7 11l3 11 4-7" fill="none" stroke="#edf3fb" strokeWidth="2.200" /><path d="M19 16l6-3v4l-6 3zM19 20v4.500l6-3.500v-4" fill="none" stroke="#edf3fb" strokeWidth="1.800" /><path d="M11 5.500l5 2.500 5-2.500M11 8l10-4.500" stroke="#264774" strokeWidth="1.600" fill="none" /></g>,
  cmd: <g><rect x="1" y="3.500" width="30" height="25" fill="#050505" stroke="#c8c8c8" /><rect x="1" y="3.500" width="30" height="3" fill="#dcdcdc" /><path d="M24 5h1.500M26.500 5H28M29 5h1.500" stroke="#444" /><text x="4" y="16" fontFamily="Liberation Mono" fontSize="8" fontWeight="700" fill="#fff">C:\_</text></g>,
  java: <g><rect x="1" y="1" width="30" height="30" rx="4" fill="#f5f7f9" stroke="#b0bac4" /><path d="M17 4q4 3 0 6t1 6q-7-3-3-7t2-5z" fill="#e8792e" /><path d="M9 17q7 3 13 0M10 21q6 2 11 0M11 24q5 2 9 0M7 27q9 4 18 0M22 17q5-1 3 3-1 2-4 2" fill="none" stroke="#4e748f" strokeWidth="1.600" /></g>,
  vs: <g fill="none" strokeWidth="5"><path d="M16 16q-5-7-10-5-5 4-1 9 5 4 11-4z" stroke="#22579e" /><path d="M16 16q6-9 11-5 4 5 0 9-5 3-11-4z" stroke="#5d3ca5" /><path d="M5 12q5-3 9 3" stroke="#75a8e0" strokeWidth="1.500" /><path d="M19 13q4-5 8-1" stroke="#a78ce0" strokeWidth="1.500" /></g>,
  adobe: <g><rect x="2" y="2" width="28" height="27" fill="#d3131b" /><path d="M2 16h28v13H2z" fill="#a50a11" /><path d="M15 6q3 0 1 6-3 9-8 13-3 0 1-3 7-4 15-3 4 2 0 2-6-1-9-8-2-6 0-7z" fill="none" stroke="#fff" strokeWidth="1.600" /></g>,
  java_ee: <g><rect width="32" height="32" fill="#4d2b70" /><circle cx="16" cy="16" r="12.500" fill="none" stroke="#ececec" strokeWidth="4" strokeDasharray="5 2.850" /><circle cx="16" cy="16" r="11" fill="#241c28" stroke="#ddd" strokeWidth="1.500" /><path d="M1 7h30v9H1z" fill="#241c28" /><text x="16" y="14" textAnchor="middle" fontFamily="Liberation Sans" fontSize="8" fill="#ff9a2e">Java EE</text><text x="16" y="24" textAnchor="middle" fontFamily="Liberation Sans" fontSize="8" fill="#ff9a2e">IDE</text></g>,
  forms: <g stroke="#eee"><rect x="3.500" y="3.500" width="10" height="7" fill="#dcdcdc" /><rect x="14.500" y="4.500" width="14" height="14" fill="#eaad0c" stroke="#a87a08" /><rect x="4.500" y="11.500" width="9" height="10" fill="#d92f2b" stroke="#9d2320" /><rect x="15.500" y="20.500" width="13" height="8" fill="#3f7fe6" stroke="#2a5cb0" /><rect x="3.500" y="23.500" width="4" height="5" fill="#9a9a9a" /><rect x="9.500" y="23.500" width="4" height="5" fill="#9a9a9a" /></g>,
};

const menu = [["Archivo", 55], ["Editar", 44], ["Ver", 31], ["Proyecto", 61], ["Generar", 55], ["Depurar", 56], ["Equipo", 51], ["Datos", 44], ["Formato", 59], ["Herramientas", 85], ["Prueba", 51], ["Ventana", 57], ["Ayuda", 50]];

const solutionRows = [
  { indent: 9, icon: "solution", text: "Solución '" },
  { indent: 5, arrow: "expanded", icon: "csproj", text: "Aplica", bold: true, selected: true },
  { indent: 24, arrow: "collapsed", icon: "fProps", text: "Pro" },
  { indent: 24, arrow: "collapsed", icon: "fRefs", text: "Ref" },
  { indent: 47, icon: "fServ", text: "Ser" },
  { indent: 24, arrow: "expanded", icon: "fOpen", text: "We" },
  { indent: 66, icon: "web" },
  { indent: 66, icon: "web" },
  { indent: 66, icon: "web" },
  { indent: 66, icon: "web" },
  { indent: 47, icon: "config", text: "app" },
  { indent: 24, arrow: "expanded", icon: "form", text: "For" },
  { indent: 66, icon: "nested" },
  { indent: 66, icon: "nested" },
  { indent: 47, icon: "cs", text: "Pro" },
];

const taskApps = [
  { icon: "folder", label: "Explorador de Windows", stacked: true },
  { icon: "chrome", label: "Google Chrome" },
  { icon: "paint", label: "Paint", idle: true },
  { icon: "vbox", label: "VirtualBox", stacked: true },
  { icon: "cmd", label: "Símbolo del sistema", stacked: true },
  { icon: "java", label: "Java" },
  { icon: "vs", label: "Visual Studio" },
  { icon: "adobe", label: "Adobe Reader" },
  { icon: "java_ee", label: "Java EE IDE" },
  { icon: "forms", label: "Form1", active: true },
];

function TreeItem({ indent, arrow, icon, text, bold, selected }) {
  return (
    <TreeRow $indent={indent} $bold={bold}>
      {arrow && <ArrowSlot><Icon name={arrow} /></ArrowSlot>}
      <TreeLabel $selected={selected}><Icon name={icon} />{text}</TreeLabel>
    </TreeRow>
  );
}
function PanelHead({ title }) {
  return (
    <PanelTitle>
      <h2>{title}</h2>
      <TitleButton aria-label="Menú"><Icon name="down" /></TitleButton>
      <TitleButton aria-label="Anclar"><Icon name="pin" /></TitleButton>
      <TitleButton aria-label="Cerrar"><Icon name="close" size={14} /></TitleButton>
    </PanelTitle>
  );
}
function Scroller({ before, after, grip }) {
  return (
    <ScrollBar>
      <Icon name="left" />
      <ScrollTrack $before={before} $after={after}>
        <Thumb>{grip && <svg width="10" height="7" viewBox="0 0 10 7"><path d="M1.500 0v7M4.500 0v7M7.500 0v7" stroke="#555" /></svg>}</Thumb>
      </ScrollTrack>
      <Icon name="right" />
    </ScrollBar>
  );
}

const actions = ["monedero", "stock", "temperatura", "estado"];

export default function App() {
  return (
    <Screen>
      <GlobalStyle />
      <TitleBar>
        <svg width="16" height="16" viewBox="0 0 16 16"><path d="M8 8Q4 3 1.500 6.500T3 11t5-3z" fill="none" stroke="#2f64ae" strokeWidth="2.200" /><path d="M8 8q4-5 6-1.500t-1.500 4.500T8 8z" fill="none" stroke="#6b459f" strokeWidth="2.200" /></svg>
        <AppTitle>AplicacionMaquinas (Ejecutando) - Microsoft Visual Studio</AppTitle>
        <WindowButtons>
          <WindowButton $w={28} aria-label="Minimizar"><svg width="14" height="14" viewBox="0 0 14 14"><rect x="1.500" y="7.500" width="11" height="4" fill="#fff" stroke="#4c5160" /></svg></WindowButton>
          <WindowButton $w={27} aria-label="Restaurar"><svg width="14" height="14" viewBox="0 0 14 14"><path d="M4.500 1.500h8v8h-2v3h-9v-8h3z" fill="#fff" stroke="#4c5160" /><rect x="4.500" y="7.500" width="3" height="2" fill="#ccc" stroke="#4c5160" /></svg></WindowButton>
          <WindowButton $w={46} $last aria-label="Cerrar"><svg width="14" height="14" viewBox="0 0 14 14"><path d="M3 3l8 8M11 3l-8 8" stroke="#4c5160" strokeWidth="4.500" /><path d="M3 3l8 8M11 3l-8 8" stroke="#fff" strokeWidth="2.600" /></svg></WindowButton>
        </WindowButtons>
      </TitleBar>
      <MenuBar>{menu.map(([t, w]) => <MenuLink key={t} href="#" $w={w}>{t}</MenuLink>)}</MenuBar>

      <ToolbarArea>
        <ToolbarLine>
          <Toolbar>
            <Grip /><Tools names="newProject" /><Arrow dim /><Tools names="addItem" /><Arrow w={12} dim />
            <Tools names="open save saveAll | cut copy paste | undo" /><Arrow w={12} dim /><Tools names="redo" /><Arrow w={12} dim />
            <Tools names="navBack" /><Arrow w={12} /><Tools names="navFwd | play" />
            <Combo w={89} gap={4} value="Debug" label="Configuración" />
            <Combo w={159} gap={7} value="x86" label="Plataforma" />
            <Separator $wide /><Tools names="find" />
            <Combo w={184} gap={4} value="juddi" label="Buscar" live />
            <Separator $wide /><Tools names="explorer properties team toolbox tools start objects command" /><Arrow />
            <Overflow />
          </Toolbar>
        </ToolbarLine>
        <ToolbarLine>
          <Toolbar>
            <Grip /><Tools names="play pause stop restart | nextStmt stepInto stepOver stepOut |" />
            <Tool $w={77}>Hexadecimal</Tool>
            <Tool $on aria-label="Subprocesos"><Icon name="threads" /></Tool>
            <Separator /><Tools names="breakpoint" /><Arrow w={12} /><Overflow />
          </Toolbar>
          <Toolbar>
            <Grip />
            <Tools names="grid | alignL alignC alignR | alignT alignM alignB | sizeW sizeH sizeBoth sizeGrid | hEqual hMore hLess hNone | vEqual vMore vLess vNone | centerH centerV | front back | table | tabOrder" />
            <Overflow />
          </Toolbar>
        </ToolbarLine>
        <ToolbarLine>
          <Toolbar>
            <Grip />
            <ToolLabel $w={54} htmlFor="proceso">Proceso:</ToolLabel><Combo id="proceso" w={200} />
            <ToolLabel $w={77} htmlFor="subproceso">&nbsp;Subproceso:</ToolLabel><Combo id="subproceso" w={199} />
            <Spacer /><Tools names="flag flags" />
            <ToolLabel $w={84} htmlFor="marco">Marco de pila:</ToolLabel><Combo id="marco" w={240} />
            <Overflow />
          </Toolbar>
        </ToolbarLine>
      </ToolbarArea>

      <WorkArea>
        <Column>
          <Panel $grow>
            <PanelHead title="Explorador de servid..." />
            <PanelTools><Tools names="refresh stopDoc | addDb addServer addSp" /></PanelTools>
            <Tree>
              <TreeItem indent={10} icon="db" text="Conexiones de datos" selected />
              <TreeItem indent={10} icon="people" text="Conexiones de SharePoin" />
              <TreeItem indent={10} icon="servers" text="Servidores" />
              <TreeItem indent={5} arrow="collapsed" icon="server" text="Encarna-HP" />
            </Tree>
            <Scroller before={15} after={6} grip />
          </Panel>
          <TabStrip>
            <PanelTab $w={83} $active><Icon name="servers" />Explora...</PanelTab>
            <PanelTab $w={80}><Icon name="tools" />Cuadro...</PanelTab>
          </TabStrip>
        </Column>

        <Column>
          <DocTabs>
            <DocTab $w={115}>Desensamblado</DocTab>
            <DocTab $w={111}><DocName $w={67}>Reference.cs</DocName><Icon name="lock" /></DocTab>
            <DocTab $w={93}><DocName $w={49}>Form1.cs</DocName><Icon name="lock" /></DocTab>
            <DocTab $w={138} $active><DocName $w={96}>Form1.cs [Diseño]</DocName><Icon name="lockOn" /><DocClose><Icon name="close" size={14} /></DocClose></DocTab>
            <DocMenu><Icon name="down" /></DocMenu>
          </DocTabs>
          <Designer>
            <FormWindow>
              <FormCaption>Form1
                <CloseBox aria-label="Cerrar"><svg width="9" height="8" viewBox="0 0 9 8"><path d="M2 1.500l5 5M7 1.500l-5 5" stroke="#4d4d57" strokeWidth="3.500" /><path d="M2 1.500l5 5M7 1.500l-5 5" stroke="#fff" strokeWidth="1.800" /></svg></CloseBox>
              </FormCaption>
              <FormBody onSubmit={(e) => e.preventDefault()}>
                <Spread><Heading>Control máquinas vending</Heading><FlatButton $w={75}>Recargar</FlatButton></Spread>
                <FieldRow>
                  <TextBox $w={31} defaultValue="M" aria-label="Código" />
                  <FormCombo>
                    <FormSelect aria-label="Máquina"><option>Selecccionar máquina de vending</option></FormSelect>
                    <svg width="16" height="19" viewBox="0 0 16 19"><path d="M0 0h16v19H0z" fill="#f0f0f0" /><path d="M5 8h6L8 11z" fill="#000" /></svg>
                  </FormCombo>
                </FieldRow>
                <FlatButton $w={323}>Buscar servicios</FlatButton>
                <FormText>Nombre de la máquina:</FormText>
                <ActionGrid>
                  {actions.map((a, i) => (
                    <React.Fragment key={a}>
                      <FlatButton $w={i ? 124 : 125}>Cambiar {a}</FlatButton>
                      <TextBox $w={25} aria-label={a} />
                    </React.Fragment>
                  ))}
                </ActionGrid>
                <FormText $last>Última modificación:</FormText>
              </FormBody>
            </FormWindow>
          </Designer>

          <Panel>
            <PanelHead title="Lista de errores" />
            <PanelTools>
              <Filter $on $w={76}><Icon name="error" />0 errores</Filter><Separator />
              <Filter $w={106}><Icon name="warn" />0 advertencias</Filter><Separator />
              <Filter $on $w={89}><Icon name="info" />0 mensajes</Filter>
            </PanelTools>
            <ErrorTable>
              <colgroup><col width="17" /><col width="19" /><col /><col width="150" /><col width="70" /></colgroup>
              <thead><tr>
                <th /><th />
                <th className="sorted">Descripción<svg width="8" height="5" viewBox="0 0 8 5"><path d="M1 4.500h6L4 1z" fill="#4f9dbd" /></svg></th>
                <th>Archivo</th><th>Línea</th>
              </tr></thead>
              <tbody><tr><td /><td /><td /><td /><td /></tr></tbody>
            </ErrorTable>
          </Panel>
          <TabStrip>
            <PanelTab $w={115}><Icon name="stack" />Pila de llamadas</PanelTab>
            <PanelTab $w={151}><Icon name="breakpoint" />Puntos de interrupción</PanelTab>
            <PanelTab $w={134}><Icon name="command" />Ventana Comandos</PanelTab>
            <PanelTab $w={87}><Icon name="output" />Resultados</PanelTab>
            <PanelTab $w={109} $active><Icon name="errList" />Lista de errores</PanelTab>
          </TabStrip>
        </Column>

        <Column>
          <Panel $grow>
            <PanelHead title="Expl..." />
            <PanelTools>
              <Tools names="propPages | showAll" />
              <MoreTools aria-label="Más"><svg width="8" height="18" viewBox="0 0 8 18"><path d="M1 0l1.500 1.500L1 3M5 0l1.500 1.500L5 3" fill="none" stroke="#1b293e" /></svg></MoreTools>
            </PanelTools>
            <Tree>{solutionRows.map((r, i) => <TreeItem key={i} {...r} />)}</Tree>
            <Scroller before={2} after={35} />
          </Panel>
          <TabStrip>
            <PanelTab $w={43} $active><Icon name="explorer" />E..</PanelTab>
            <PanelTab $w={43}><Icon name="team" />T..</PanelTab>
          </TabStrip>
        </Column>
      </WorkArea>

      <StatusBar>Listo</StatusBar>

      <TaskBar>
        <StartButton aria-label="Inicio">
          <svg width="38" height="38" viewBox="0 0 38 38">
            <circle cx="19" cy="19" r="18" fill="#2b618f" stroke="#9ab7ca" />
            <path d="M2.500 17a16.500 16.500 0 0 1 33 0q-16 6-33 0z" fill="#88b3cf" opacity=".75" />
            <ellipse cx="19" cy="31" rx="11" ry="5" fill="#49bfe8" opacity=".8" />
            <path d="M11 10q4-3 8 0l-2 8q-4-2-8 0z" fill="#ef6a2b" /><path d="M20.500 10.500q4 3 8 0l-2 8q-4 3-8 0z" fill="#8dc73f" />
            <path d="M8.500 19.500q4-2 8 0l-2 8q-4-3-8 0z" fill="#40a3e2" /><path d="M18 20q4 3 8 0l-2 8q-4 3-8 0z" fill="#fcca34" />
          </svg>
        </StartButton>
        {taskApps.map(({ icon, label, stacked, idle, active }) => (
          <TaskButton key={icon} $stacked={stacked} $idle={idle} $active={active} aria-label={label}>
            <svg width="32" height="32" viewBox="0 0 32 32">{apps[icon]}</svg>
          </TaskButton>
        ))}
        <Tray>
          <TrayLang>ES</TrayLang>
          <TrayIcon aria-label="Mostrar iconos"><svg width="16" height="16" viewBox="0 0 16 16"><path d="M3 10.500h8L7 6z" fill="#fff" /></svg></TrayIcon>
          <TrayIcon aria-label="Batería"><svg width="16" height="16" viewBox="0 0 16 16"><path d="M4.500 3.500h2v-2h3v2h2v11h-7z" fill="#222" stroke="#fff" strokeWidth="1.300" /><path d="M6.500 8h3v5h-3z" fill="#fff" /></svg></TrayIcon>
          <TrayIcon aria-label="Volumen"><svg width="16" height="16" viewBox="0 0 16 16"><path d="M2 6h2l4-4v12l-4-4H2z" fill="#fff" /><path d="M10 5.500q2 2.500 0 5M12 4q3 4 0 8" fill="none" stroke="#fff" /></svg></TrayIcon>
          <TrayIcon aria-label="Dropbox"><svg width="16" height="16" viewBox="0 0 16 16"><path d="M4.500 1L8 3.500 11.500 1 16 4l-3 2.500L16 9l-4.500 3L8 9.500 4.500 12 0 9l3-2.500L0 4zM4 13l4-2.500 4 2.500-4 2.500z" fill="#7ec6f3" stroke="#2f7ab3" strokeWidth=".6" /><circle cx="12" cy="12" r="3.800" fill="#2ea43c" /><path d="M10 12l1.500 1.500 2.500-3" fill="none" stroke="#fff" strokeWidth="1.300" /></svg></TrayIcon>
          <Clock>21:12<br />10/12/2014</Clock>
          <ShowDesktop aria-label="Mostrar escritorio" />
        </Tray>
      </TaskBar>
    </Screen>
  );
}
